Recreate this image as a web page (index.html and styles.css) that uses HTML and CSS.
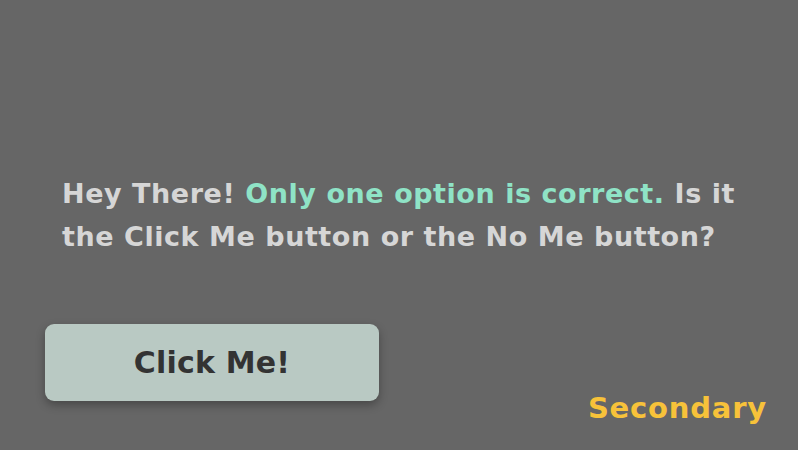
FILE: index.html
```html
<!DOCTYPE html>
<html>
<head>
<meta charset="utf-8">
<link rel="stylesheet" href="styles.css">
</head>
<body>
<main class="stage">
  <p class="prompt">Hey There! <span class="accent">Only one option is correct.</span> Is it<br>the Click Me button or the No Me button?</p>
  <div class="bottom">
    <button class="btn">Click Me!</button>
    <span class="secondary">Secondary</span>
  </div>
</main>
</body>
</html>
```
FILE: styles.css
```css
html, body {
  margin: 0;
  padding: 0;
  background: #666666;
}
.stage {
  width: 798px;
  height: 450px;
  box-sizing: border-box;
  display: flex;
  flex-direction: column;
  font-family: "DejaVu Sans", "Noto Sans", sans-serif;
  font-weight: 700;
}
.prompt {
  margin: 172px 0 0 62px;
  font-size: 27px;
  line-height: 43px;
  letter-spacing: 0.55px;
  color: #d6d6d6;
  white-space: nowrap;
}
.accent {
  color: #8fe3c6;
}
.bottom {
  display: flex;
  align-items: flex-start;
  justify-content: space-between;
  margin: 66px 32px 0 45px;
}
.btn {
  width: 334px;
  height: 77px;
  border: none;
  border-radius: 9px;
  background: #b9c9c3;
  color: #333333;
  font-family: inherit;
  font-weight: 700;
  font-size: 30px;
  letter-spacing: 0.2px;
  box-shadow: 0 4px 10px rgba(0, 0, 0, 0.3);
  padding: 0;
}
.secondary {
  margin-top: 67px;
  font-size: 29px;
  letter-spacing: 0.8px;
  margin-right: -1px;
  color: #f7c23a;
}
```
